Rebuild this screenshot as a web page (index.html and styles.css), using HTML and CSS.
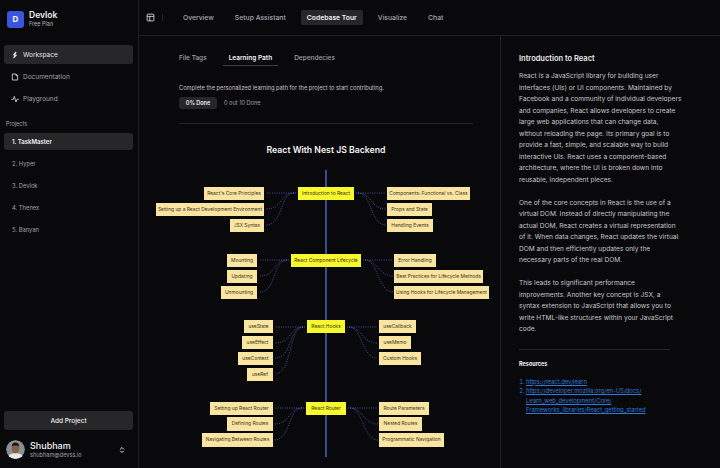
FILE: index.html
```html
<!DOCTYPE html>
<html lang="en">
<head>
<meta charset="utf-8">
<title>Devlok</title>
<link rel="stylesheet" href="styles.css">
</head>
<body>
<div class="app">
  <aside class="sidebar">
    <div class="brand">
      <div class="logo">D</div>
      <div class="brand-text"><div class="brand-name">Devlok</div><div class="brand-plan">Free Plan</div></div>
    </div>
    <nav class="nav">
      <a class="nav-item active"><svg class="nav-icon" viewBox="0 0 24 24"><path d="M13 2 5 13h5l-4 9 4-1 9-10h-6l4-8z" fill="currentColor"/></svg>Workspace</a>
      <a class="nav-item"><svg class="nav-icon" viewBox="0 0 24 24" fill="none" stroke="currentColor" stroke-width="2.4"><path d="M4 3h11l5 5v13H4z" stroke-linejoin="round"/><path d="M15 3v5h5"/></svg>Documentation</a>
      <a class="nav-item"><svg class="nav-icon" viewBox="0 0 24 24" fill="none" stroke="currentColor" stroke-width="2.4" stroke-linejoin="round" stroke-linecap="round"><path d="M2 13h5l3-9 5 17 3-8h4"/></svg>Playground</a>
    </nav>
    <div class="projects-label">Projects</div>
    <ul class="projects">
      <li class="project active">1. TaskMaster</li>
      <li class="project">2. Hyper</li>
      <li class="project">3. Devlok</li>
      <li class="project">4. Thenex</li>
      <li class="project">5. Banyan</li>
    </ul>
    <button class="add-project">Add Project</button>
    <div class="user">
      <svg class="avatar" viewBox="0 0 20 20"><circle cx="10" cy="10" r="10" fill="#8a8f94"/><path d="M2 20c0-5 4-6 8-6s8 1 8 6z" fill="#e8e8e8"/><ellipse cx="10" cy="9" rx="4" ry="5" fill="#8a5f48"/><path d="M6 7c0-3 2-4.500 4-4.500S14 4 14 7c-2-1.500-6-1.500-8 0z" fill="#1c1512"/></svg>
      <div class="user-text"><div class="user-name">Shubham</div><div class="user-mail">shubham@devss.io</div></div>
      <svg class="chevrons" viewBox="0 0 12 16" fill="none" stroke="currentColor" stroke-width="2" stroke-linecap="round" stroke-linejoin="round"><path d="M3 6l3-3 3 3M3 10l3 3 3-3"/></svg>
    </div>
  </aside>
  <main class="main">
    <header class="topbar">
      <svg class="panel-icon" viewBox="0 0 24 24" fill="none" stroke="currentColor" stroke-width="2.2"><rect x="3" y="3" width="18" height="18" rx="2"/><path d="M3 9h18M10 9v12"/></svg>
      <span class="topbar-sep"></span>
      <nav class="tabs">
        <a class="tab">Overview</a>
        <a class="tab">Setup Assistant</a>
        <a class="tab active">Codebase Tour</a>
        <a class="tab">Visualize</a>
        <a class="tab">Chat</a>
      </nav>
    </header>
    <div class="body">
      <section class="content">
        <nav class="subtabs">
          <a class="subtab">File Tags</a>
          <a class="subtab active">Learning Path</a>
          <a class="subtab">Dependecies</a>
        </nav>
        <p class="intro">Complete the personalized learning path for the project to start contributing.</p>
        <div class="progress"><span class="pill">0% Done</span><span class="count">0 out 10 Done</span></div>
        <hr class="rule">
        <h2 class="map-title">React With Nest JS Backend</h2>
        <div class="map">
          <svg class="links" viewBox="0 0 361 303" fill="none">
            <rect class="spine" x="186" y="5" width="2" height="287"/>
            <g class="dots" transform="translate(-139 -165)">
              <path d="M296 193H266M294 193C280 193 283 209 266 209M294 193C280 193 283 225 266 225"/>
              <path d="M356 193H386M358 193C372 193 370 209 386 209M358 193C372 193 370 225 386 225"/>
              <path d="M289 260H260M287 260C273 260 276 276 260 276M287 260C273 260 276 292 260 292"/>
              <path d="M363 260H393M365 260C378 260 378 276 393 276M365 260C378 260 378 292 393 292"/>
              <path d="M305 327H275M303 327C289 327 292 343 275 343M303 327C289 327 292 358 275 358M303 327C289 327 292 374 275 374"/>
              <path d="M347 327H377M349 327C362 327 362 343 377 343M349 327C362 327 362 358 377 358"/>
              <path d="M304 408H274M302 408C288 408 291 424 274 424M302 408C288 408 291 440 274 440"/>
              <path d="M348 408H378M350 408C363 408 363 424 378 424M350 408C363 408 363 440 378 440"/>
            </g>
          </svg>
          <div class="node main-node a1">Introduction to React</div>
          <div class="node a2">React's Core Principles</div>
          <div class="node a3">Setting up a React Development Environment</div>
          <div class="node a4">JSX Syntax</div>
          <div class="node a5">Components: Functional vs. Class</div>
          <div class="node a6">Props and State</div>
          <div class="node a7">Handling Events</div>
          <div class="node main-node b1">React Component Lifecycle</div>
          <div class="node b2">Mounting</div>
          <div class="node b3">Updating</div>
          <div class="node b4">Unmounting</div>
          <div class="node b5">Error Handling</div>
          <div class="node b6">Best Practices for Lifecycle Methods</div>
          <div class="node b7">Using Hooks for Lifecycle Management</div>
          <div class="node main-node c1">React Hooks</div>
          <div class="node c2">useState</div>
          <div class="node c3">useEffect</div>
          <div class="node c4">useContext</div>
          <div class="node c5">useRef</div>
          <div class="node c6">useCallback</div>
          <div class="node c7">useMemo</div>
          <div class="node c8">Custom Hooks</div>
          <div class="node main-node d1">React Router</div>
          <div class="node d2">Setting up React Router</div>
          <div class="node d3">Defining Routes</div>
          <div class="node d4">Navigating Between Routes</div>
          <div class="node d5">Route Parameters</div>
          <div class="node d6">Nested Routes</div>
          <div class="node d7">Programmatic Navigation</div>
        </div>
      </section>
      <section class="panel">
        <h3 class="panel-title">Introduction to React</h3>
        <p class="panel-text">React is a JavaScript library for building user interfaces (UIs) or UI components. Maintained by Facebook and a community of individual developers and companies, React allows developers to create large web applications that can change data, without reloading the page. Its primary goal is to provide a fast, simple, and scalable way to build interactive UIs. React uses a component-based architecture, where the UI is broken down into reusable, independent pieces.</p>
        <p class="panel-text">One of the core concepts in React is the use of a virtual DOM. Instead of directly manipulating the actual DOM, React creates a virtual representation of it. When data changes, React updates the virtual DOM and then efficiently updates only the necessary parts of the real DOM.</p>
        <p class="panel-text">This leads to significant performance improvements. Another key concept is JSX, a syntax extension to JavaScript that allows you to write HTML-like structures within your JavaScript code.</p>
        <hr class="panel-rule">
        <h4 class="res-title">Resources</h4>
        <ol class="res-list">
          <li><a>https://react.dev/learn</a></li>
          <li><a>https://developer.mozilla.org/en-US/docs/<br>Learn_web_development/Core/<br>Frameworks_libraries/React_getting_started</a></li>
        </ol>
      </section>
    </div>
  </main>
</div>
</body>
</html>
```
FILE: styles.css
```css
* { box-sizing: border-box; }
html, body { margin: 0; height: 100%; }
body { background: #09090b; color: #e4e4e7; font-family: Inter, "Liberation Sans", sans-serif; overflow: hidden; }
.app { display: flex; width: 720px; height: 468px; }

.sidebar { width: 139px; flex: none; display: flex; flex-direction: column; padding: 10px 5px 9px 4px; border-right: 1px solid #1f1f22; }
.brand { display: flex; align-items: center; gap: 5px; padding-left: 3px; }
.logo { width: 17px; height: 17px; border-radius: 3px; background: #3a55e0; color: #fff; font-size: 8px; font-weight: 700; display: flex; align-items: center; justify-content: center; }
.brand-name { font-size: 8.5px; font-weight: 600; color: #f4f4f5; line-height: 10px; }
.brand-plan { font-size: 5.5px; color: #b4b4b8; line-height: 8px; }
.nav { display: flex; flex-direction: column; gap: 3.300px; margin-top: 17px; }
.nav-item { display: flex; align-items: center; gap: 4px; height: 19px; padding-left: 7px; border-radius: 3px; font-size: 6.500px; color: #a1a1aa; }
.nav-item.active { background: #27272a; color: #e4e4e7; }
.nav-icon { width: 8px; height: 8px; color: #e4e4e7; }
.projects-label { font-size: 5.500px; color: #a1a1aa; margin: 11.500px 0 0 2px; line-height: 8px; }
.projects { list-style: none; margin: 5px 0 0; padding: 0; flex: 1; display: flex; flex-direction: column; gap: 5px; }
.project { height: 17px; display: flex; align-items: center; padding-left: 8px; font-size: 5.800px; color: #a1a1aa; border-radius: 3px; }
.project.active { background: #27272a; color: #f4f4f5; font-weight: 600; font-size: 6px; }
.add-project { height: 19px; border: 0; border-radius: 3px; background: #27272a; color: #f0f0f2; font-family: inherit; font-size: 6.500px; font-weight: 500; }
.user { display: flex; align-items: center; gap: 5px; margin-top: 10px; padding-left: 2px; }
.avatar { width: 19px; height: 19px; border-radius: 50%; flex: none; }
.user-text { flex: 1; }
.user-name { font-size: 9px; font-weight: 500; color: #f4f4f5; line-height: 10px; }
.user-mail { font-size: 5.600px; color: #a1a1aa; line-height: 8px; }
.chevrons { width: 6px; height: 8px; color: #e4e4e7; margin-right: 8px; }

.main { flex: 1; display: flex; flex-direction: column; min-width: 0; }
.topbar { height: 36px; flex: none; display: flex; align-items: center; padding-left: 7px; border-bottom: 1px solid #1f1f22; }
.panel-icon { width: 9px; height: 9px; color: #e4e4e7; }
.topbar-sep { width: 1px; height: 7px; background: #27272a; margin: 0 0 0 7px; }
.tabs { display: flex; align-items: center; margin-left: 14px; gap: 9px; }
.tab { padding: 0 6px; height: 15px; line-height: 15px; font-size: 6.800px; font-weight: 500; color: #a9a9b0; border-radius: 2px; }
.tab.active { background: #27272a; color: #f0f0f2; font-weight: 600; }

.body { flex: 1; display: flex; min-height: 0; }
.content { width: 362px; flex: none; padding: 0 27px 0 40px; border-right: 1px solid #1f1f22; }
.subtabs { display: flex; gap: 10px; margin: 15px 0 0 -6px; }
.subtab { padding: 0 6px; height: 15px; line-height: 14px; font-size: 6.500px; font-weight: 500; color: #a1a1aa; }
.subtab.active { color: #f4f4f5; font-weight: 600; border-bottom: 1px solid #3f3f46; }
.intro { margin: 18px 0 0; font-size: 5.700px; line-height: 8px; color: #c4c4c8; }
.progress { display: flex; align-items: center; gap: 7px; margin-top: 5px; }
.pill { width: 38px; height: 12px; border-radius: 3px; background: #27272a; color: #f0f0f2; font-size: 5.500px; font-weight: 600; display: flex; align-items: center; justify-content: center; }
.count { font-size: 5.600px; color: #a1a1aa; }
.rule { border: 0; border-top: 1px solid #27272a; margin: 14px 0 0; }
.map-title { margin: 19.500px 0 0; text-align: center; font-size: 8.700px; line-height: 12px; font-weight: 600; color: #f4f4f5; }

.map { position: relative; margin: 9.500px 0 0 -40px; width: 361px; height: 303px; }
.links { position: absolute; left: 0; top: 0; width: 361px; height: 303px; }
.spine { fill: #3c4d94; }
.dots path { stroke: #5062c0; stroke-width: 0.800; stroke-dasharray: 1 1.300; }
.node { position: absolute; height: 13.300px; background: #f9e4a0; color: #3b3520; font-size: 4.900px; line-height: 13.300px; text-align: center; white-space: nowrap; }
.main-node { background: #f8f82e; color: #33331a; }

.a1 { left: 159px; top: 21.500px; width: 56px; }
.a2 { left: 65px; top: 21.500px; width: 60px; }
.a3 { left: 17px; top: 37.500px; width: 108px; }
.a4 { left: 91px; top: 53.500px; width: 34px; }
.a5 { left: 248px; top: 21.500px; width: 83px; }
.a6 { left: 248px; top: 37.500px; width: 45px; }
.a7 { left: 248px; top: 53.500px; width: 46px; }
.b1 { left: 152px; top: 88.500px; width: 70px; }
.b2 { left: 88px; top: 88.500px; width: 30px; }
.b3 { left: 88px; top: 104.500px; width: 30px; }
.b4 { left: 82px; top: 120.500px; width: 36px; }
.b5 { left: 255px; top: 88.500px; width: 42px; }
.b6 { left: 255px; top: 104.500px; width: 89px; }
.b7 { left: 255px; top: 120.500px; width: 95px; }
.c1 { left: 168px; top: 155px; width: 38px; }
.c2 { left: 105px; top: 155px; width: 29px; }
.c3 { left: 103px; top: 171px; width: 31px; }
.c4 { left: 99px; top: 186.700px; width: 35px; }
.c5 { left: 108px; top: 202.700px; width: 26px; }
.c6 { left: 240px; top: 155px; width: 37px; }
.c7 { left: 240px; top: 171px; width: 32px; }
.c8 { left: 240px; top: 186.700px; width: 42px; }
.d1 { left: 167px; top: 236.700px; width: 40px; }
.d2 { left: 71px; top: 236.700px; width: 63px; }
.d3 { left: 88px; top: 252.300px; width: 46px; }
.d4 { left: 63px; top: 268.300px; width: 71px; }
.d5 { left: 240px; top: 236.700px; width: 50px; }
.d6 { left: 240px; top: 252.300px; width: 43px; }
.d7 { left: 240px; top: 268.300px; width: 65px; }

.panel { flex: 1; padding: 17px 38px 0 18px; min-width: 0; }
.panel-title { margin: 0; font-size: 7.500px; font-weight: 600; line-height: 11px; color: #ececee; }
.panel-text { margin: 7px 0 0; font-size: 6.600px; line-height: 11.500px; color: #c8c8cc; }
.panel-text + .panel-text { margin-top: 11.500px; }
.panel-rule { border: 0; border-top: 1px solid #27272a; margin: 13px 12px 0 0; }
.res-title { margin: 10px 0 0; font-size: 5.500px; font-weight: 700; line-height: 8px; color: #f4f4f5; }
.res-list { margin: 9px 0 0; padding-left: 7px; font-size: 5.800px; line-height: 9.600px; color: #2f7bd6; }
.res-list a { text-decoration: underline; color: #2f7bd6; white-space: nowrap; }
```
